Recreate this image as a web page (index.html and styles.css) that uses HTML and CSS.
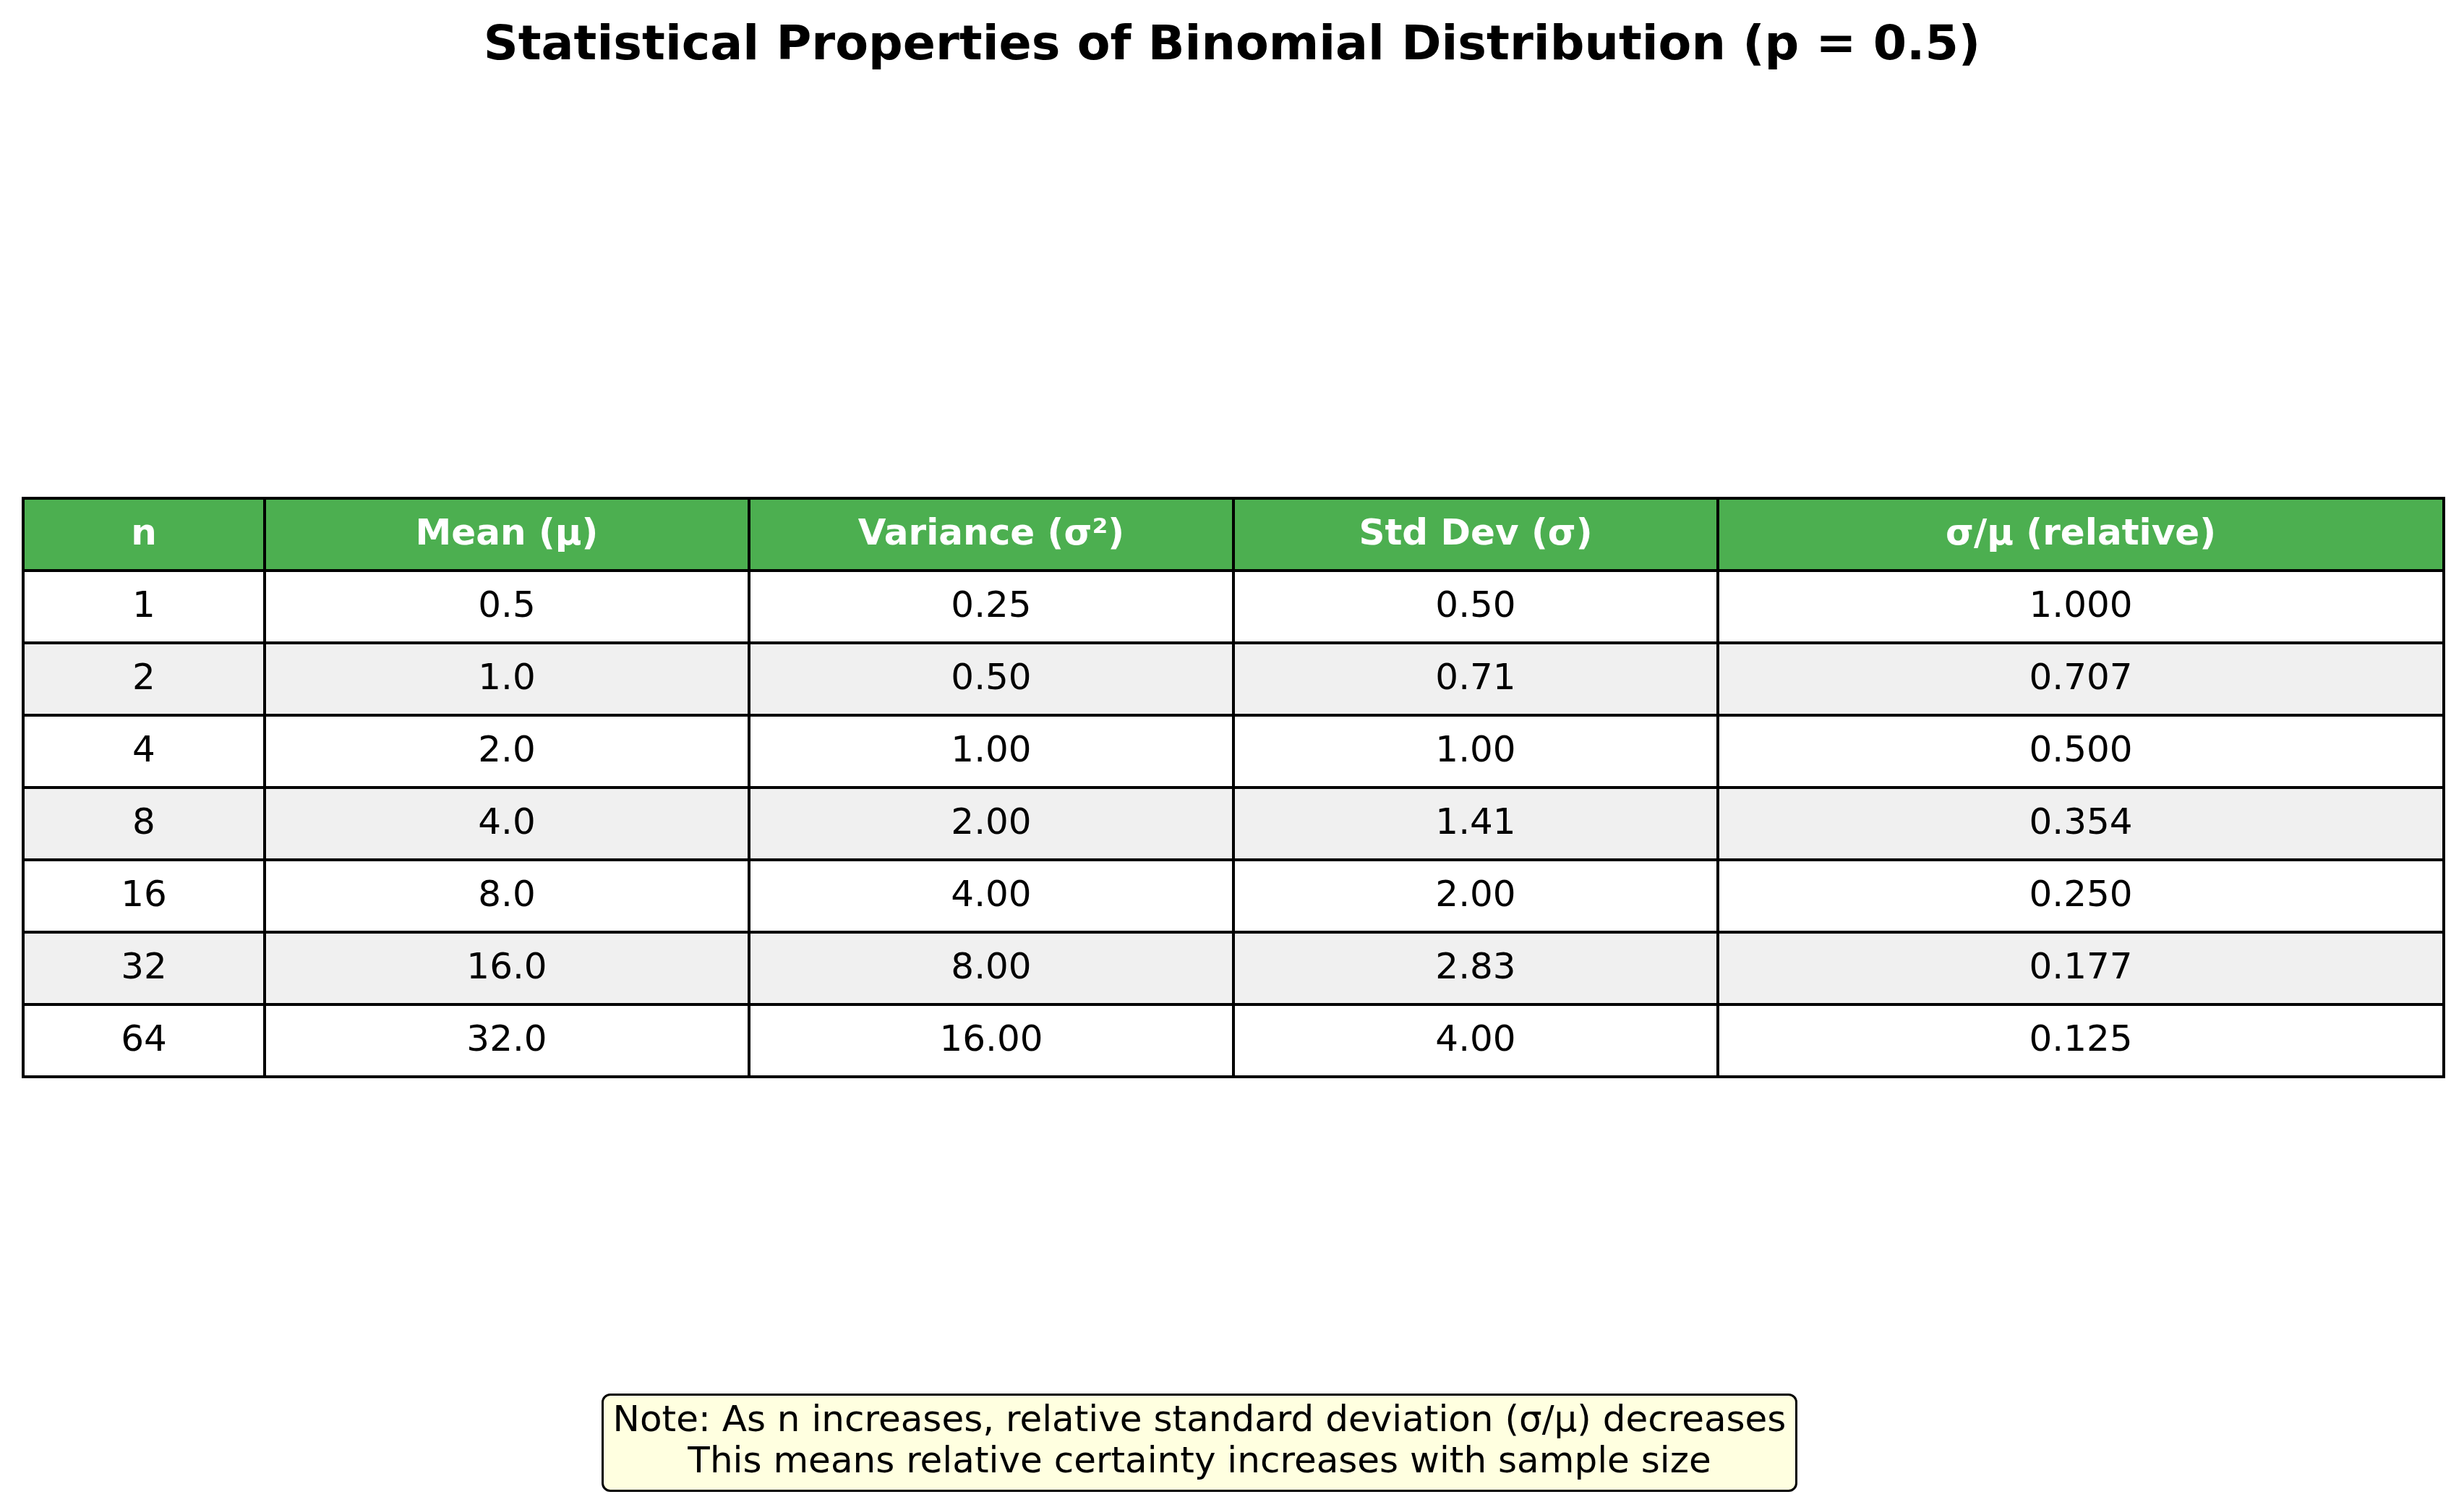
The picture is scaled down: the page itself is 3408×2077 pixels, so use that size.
FILE: index.html
```html
<!DOCTYPE html>
<html>
<head>
<meta charset="utf-8">
<link rel="stylesheet" href="styles.css">
</head>
<body>
<div class="page">
  <h1 class="title">Statistical Properties of Binomial Distribution (p = 0.5)</h1>
  <table class="stats">
    <colgroup>
      <col class="c1"><col class="c2"><col class="c2"><col class="c2"><col class="c3">
    </colgroup>
    <thead>
      <tr><th>n</th><th>Mean (μ)</th><th>Variance (σ²)</th><th>Std Dev (σ)</th><th>σ/μ (relative)</th></tr>
    </thead>
    <tbody>
      <tr><td>1</td><td>0.5</td><td>0.25</td><td>0.50</td><td>1.000</td></tr>
      <tr class="alt"><td>2</td><td>1.0</td><td>0.50</td><td>0.71</td><td>0.707</td></tr>
      <tr><td>4</td><td>2.0</td><td>1.00</td><td>1.00</td><td>0.500</td></tr>
      <tr class="alt"><td>8</td><td>4.0</td><td>2.00</td><td>1.41</td><td>0.354</td></tr>
      <tr><td>16</td><td>8.0</td><td>4.00</td><td>2.00</td><td>0.250</td></tr>
      <tr class="alt"><td>32</td><td>16.0</td><td>8.00</td><td>2.83</td><td>0.177</td></tr>
      <tr><td>64</td><td>32.0</td><td>16.00</td><td>4.00</td><td>0.125</td></tr>
    </tbody>
  </table>
  <div class="note">Note: As n increases, relative standard deviation (σ/μ) decreases<br>This means relative certainty increases with sample size</div>
</div>
</body>
</html>
```
FILE: styles.css
```css
html, body {
  margin: 0;
  padding: 0;
  background: #ffffff;
}
.page {
  width: 3408px;
  height: 2077px;
  font-family: "DejaVu Sans", "Liberation Sans", sans-serif;
  color: #000;
  display: flex;
  flex-direction: column;
}
.title {
  margin: 20px 0 0 0;
  height: 78px;
  line-height: 78px;
  font-size: 66.7px;
  font-weight: bold;
  text-align: center;
}
.stats {
  margin: 589px 0 0 30px;
  width: 3348px;
  border-collapse: collapse;
  table-layout: fixed;
  font-size: 50px;
}
.c1 { width: 334px; }
.c2 { width: 670px; }
.c3 { width: 1004px; }
.stats tr {
  height: 100px;
}
.stats th, .stats td {
  border: 4px solid #000;
  padding: 0 0 6px 0;
  line-height: 58px;
  text-align: center;
  vertical-align: middle;
}
.stats th {
  background: #4caf50;
  color: #ffffff;
  font-weight: bold;
}
.stats td {
  background: #ffffff;
}
.stats tr.alt td {
  background: #f0f0f0;
}
.note {
  margin: 436px 0 0 832px;
  width: 1654px;
  height: 136px;
  box-sizing: border-box;
  border: 3px solid #000;
  border-radius: 12px;
  background: #ffffe0;
  font-size: 50px;
  line-height: 57px;
  padding-top: 4px;
  text-align: center;
}
```
